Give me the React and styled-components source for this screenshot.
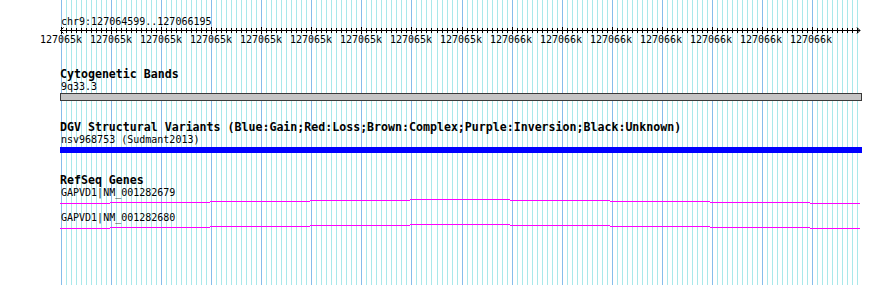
import React from "react";
import styled, { createGlobalStyle } from "styled-components";

const Global = createGlobalStyle`
  html, body { margin: 0; padding: 0; background: #fff; }
  body { font-family: "DejaVu Sans Mono", "Liberation Mono", monospace; color: #000; }
`;

const Frame = styled.div`
  position: relative;
  width: 890px;
  height: 285px;
  overflow: hidden;
  background: #fff;
`;

const GridSvg = styled.svg`
  position: absolute;
  left: 0;
  top: 0;
  z-index: 0;
  pointer-events: none;
`;

const Content = styled.div`
  position: relative;
  z-index: 1;
  display: flex;
  flex-direction: column;
  padding-left: 60px;
  width: 802px;
`;

const Locus = styled.div`
  margin-top: 15.5px;
  font-size: 10px;
  line-height: 12px;
  height: 12px;
  padding-left: 1px;
  white-space: pre;
`;

const RulerSvg = styled.svg`
  display: block;
  margin-top: -1.5px;
`;

const TickRow = styled.div`
  display: flex;
  margin-left: -24px;
  font-size: 10px;
  line-height: 12px;
  height: 12px;
`;

const TickLabel = styled.div`
  width: 50px;
  flex: none;
  text-align: center;
  white-space: pre;
`;

const Track = styled.section`
  display: flex;
  flex-direction: column;
  margin-top: ${(p) => p.$gap}px;
`;

const Title = styled.div`
  font-weight: bold;
  font-size: 11.6px;
  line-height: 13px;
  height: 13px;
  white-space: pre;
`;

const Sub = styled.div`
  font-size: 10px;
  line-height: 11px;
  height: 11px;
  padding-left: 1px;
  white-space: pre;
  margin-top: ${(p) => p.$gap || 0}px;
`;

const Bar = styled.div`
  box-sizing: border-box;
  width: 802px;
  height: ${(p) => p.$h}px;
  margin-top: ${(p) => p.$gap}px;
  background: ${(p) => p.$fill};
  border: ${(p) => p.$border || "none"};
`;

const GeneSvg = styled.svg`
  display: block;
`;

const W = 890;
const H = 285;
const gridXs = Array.from({ length: 160 }, (_, k) => Math.round(61 + k * 5.0067));

function Grid() {
  return (
    <GridSvg width={W} height={H} shapeRendering="crispEdges">
      {gridXs.map((x, k) => (
        <line
          key={k}
          x1={x + 0.5}
          x2={x + 0.5}
          y1={0}
          y2={H}
          stroke={k % 10 === 0 ? "#86bdea" : "#a9e8ea"}
          strokeWidth={1}
        />
      ))}
    </GridSvg>
  );
}

function Ruler() {
  return (
    <RulerSvg width={802} height={8} shapeRendering="crispEdges">
      <line x1={0} x2={800} y1={4.5} y2={4.5} stroke="#000" />
      {gridXs.map((gx, k) => {
        const x = gx - 60 + 0.5;
        const major = k % 10 === 0;
        return (
          <line key={k} x1={x} x2={x} y1={major ? 1 : 2} y2={major ? 8 : 7} stroke="#000" />
        );
      })}
      <polyline points="3.5,1.5 0.5,4.5 3.5,7.5" fill="none" stroke="#000" shapeRendering="auto" />
      <polyline points="797,1.5 800,4.5 797,7.5" fill="none" stroke="#000" shapeRendering="auto" />
    </RulerSvg>
  );
}

const levels = [
  [0, 50, 5],
  [50, 150, 4],
  [150, 250, 3],
  [250, 350, 2],
  [350, 450, 1],
  [450, 550, 2],
  [550, 650, 3],
  [650, 750, 4],
  [750, 800, 5],
];

function GeneLine() {
  return (
    <GeneSvg width={802} height={10} shapeRendering="crispEdges">
      {levels.map(([a, b, y], i) => (
        <line key={i} x1={a} x2={b} y1={y + 0.5} y2={y + 0.5} stroke="#ff00ff" strokeWidth={1} />
      ))}
    </GeneSvg>
  );
}

const labels = [
  ...Array(9).fill("127065k"),
  ...Array(7).fill("127066k"),
];

export default function App() {
  return (
    <>
      <Global />
      <Frame>
        <Grid />
        <Content>
          <Locus>chr9:127064599..127066195</Locus>
          <Ruler />
          <TickRow>
            {labels.map((l, i) => (
              <TickLabel key={i}>{l}</TickLabel>
            ))}
          </TickRow>

          <Track $gap={21.5}>
            <Title>Cytogenetic Bands</Title>
            <Sub>9q33.3</Sub>
            <Bar $gap={1} $h={8} $fill="#c4c4c4" $border="1px solid #3a3a3a" />
          </Track>

          <Track $gap={20.5}>
            <Title>DGV Structural Variants (Blue:Gain;Red:Loss;Brown:Complex;Purple:Inversion;Black:Unknown)</Title>
            <Sub>nsv968753 (Sudmant2013)</Sub>
            <Bar $gap={2} $h={6} $fill="#0000ff" />
          </Track>

          <Track $gap={20.5}>
            <Title>RefSeq Genes</Title>
            <Sub>GAPVD1|NM_001282679</Sub>
            <GeneLine />
            <Sub $gap={4}>GAPVD1|NM_001282680</Sub>
            <GeneLine />
          </Track>
        </Content>
      </Frame>
    </>
  );
}
